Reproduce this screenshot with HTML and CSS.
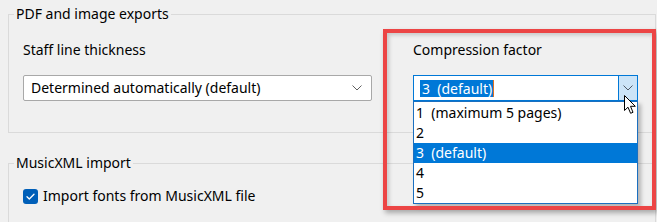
FILE: index.html
```html
<!DOCTYPE html>
<html>
<head>
<meta charset="utf-8">
<link rel="stylesheet" href="styles.css">
</head>
<body>
<div class="page">
  <fieldset class="group group-pdf">
    <legend>PDF and image exports</legend>
    <div class="cols">
      <div class="col col-left">
        <div class="label">Staff line thickness</div>
        <div class="combo">
          <span class="combo-text">Determined automatically (default)</span>
          <span class="chev"><svg width="10" height="6" viewBox="0 0 10 6"><path d="M0.5 0.5 L5 5 L9.5 0.5" fill="none" stroke="#606060" stroke-width="1"/></svg></span>
        </div>
      </div>
      <div class="col col-right">
        <div class="label">Compression factor</div>
        <div class="combo combo-open">
          <span class="combo-text"><span class="sel">3&nbsp;&nbsp;(default)</span><span class="caret"></span></span>
          <span class="combo-btn"><svg width="10" height="6" viewBox="0 0 10 6"><path d="M0.5 0.5 L5 5 L9.5 0.5" fill="none" stroke="#505a66" stroke-width="1"/></svg></span>
          <ul class="list">
            <li>1&nbsp;&nbsp;(maximum 5 pages)</li>
            <li>2</li>
            <li class="active">3&nbsp;&nbsp;(default)</li>
            <li>4</li>
            <li>5</li>
          </ul>
        </div>
      </div>
    </div>
  </fieldset>
  <fieldset class="group group-xml">
    <legend>MusicXML import</legend>
    <div class="xml-body">
      <label class="check"><span class="box"><svg width="15" height="15" viewBox="0 0 15 15"><path d="M4 7.8 L6.3 10 L11 5.2" fill="none" stroke="#ffffff" stroke-width="1.3" stroke-linecap="round" stroke-linejoin="round"/></svg></span>Import fonts from MusicXML file</label>
    </div>
  </fieldset>
  <div class="annot"></div>
  <svg class="cursor" width="14" height="20" viewBox="0 0 14 20"><path d="M0.5 0.5 L0.5 15.5 L4 12.2 L6.6 18.3 L9 17.3 L6.5 11.3 L11.3 11.3 Z" fill="#ffffff" stroke="#000000" stroke-width="1" stroke-linejoin="round"/></svg>
</div>
</body>
</html>
```
FILE: styles.css
```css
* { box-sizing: border-box; }
html, body { margin: 0; padding: 0; }
body {
  background: #f0f0f0;
  font-family: "Noto Sans", "Open Sans", sans-serif;
  font-size: 14px;
  color: #000;
  overflow: hidden;
}
.page {
  position: relative;
  width: 657px;
  height: 222px;
  padding-top: 4px;
  overflow: hidden;
}
.group {
  margin: 0 1px 0 8px;
  padding: 0;
  border: 1px solid #dadada;
  min-width: 0;
}
.group legend {
  margin-left: 5px;
  padding: 0 2px;
  line-height: 20px;
}
.cols {
  display: flex;
  gap: 41px;
  padding: 16px 0 31px 14px;
}
.col-left { width: 349px; }
.col-right { width: 225px; }
.label {
  line-height: 20px;
  margin-bottom: 15px;
}
.combo {
  position: relative;
  display: flex;
  align-items: center;
  height: 26px;
  background: #ffffff;
  border: 1px solid #a8a8a8;
  border-radius: 2px;
}
.combo-text {
  flex: 1;
  padding-left: 7px;
  line-height: 20px;
  white-space: nowrap;
  display: flex;
  align-items: center;
}
.chev {
  width: 20px;
  display: flex;
  justify-content: center;
  margin-right: 4px;
}
.combo-open {
  border-color: #0078d7;
  border-radius: 0;
  align-items: stretch;
}
.combo-open .combo-text { padding-left: 6px; }
.sel {
  background: #0078d7;
  color: #ffffff;
  line-height: 17px;
  padding: 0 1px 0 2px;
}
.caret {
  width: 1px;
  height: 17px;
  background: #e07020;
}
.combo-btn {
  width: 19px;
  background: #cce4f7;
  border-left: 1px solid #0078d7;
  display: flex;
  align-items: center;
  justify-content: center;
}
.list {
  position: absolute;
  left: -1px;
  right: -1px;
  top: calc(100% + 1px);
  margin: 0;
  padding: 1px 0 0;
  list-style: none;
  background: #ffffff;
  border: 1px solid #1a6fc0;
  box-shadow: 3px 3px 4px rgba(0,0,0,0.25);
}
.list li {
  height: 20px;
  line-height: 20px;
  padding-left: 2px;
}
.list li.active {
  background: #0078d7;
  color: #ffffff;
}
.group-xml {
  margin-top: 20px;
  border-bottom: none;
}
.xml-body { padding: 13px 0 16px 14px; }
.check {
  display: flex;
  align-items: center;
  line-height: 20px;
}
.box {
  width: 15px;
  height: 15px;
  border-radius: 3px;
  background: #005fb8;
  margin-right: 5px;
  display: flex;
}
.annot {
  position: absolute;
  left: 383px;
  top: 29px;
  width: 273px;
  height: 181px;
  border: 4px solid #ec4545;
  box-shadow: 2px 3px 5px rgba(0,0,0,0.3), inset 2px 2px 4px rgba(0,0,0,0.18);
}
.cursor {
  position: absolute;
  left: 624px;
  top: 95px;
}
```
